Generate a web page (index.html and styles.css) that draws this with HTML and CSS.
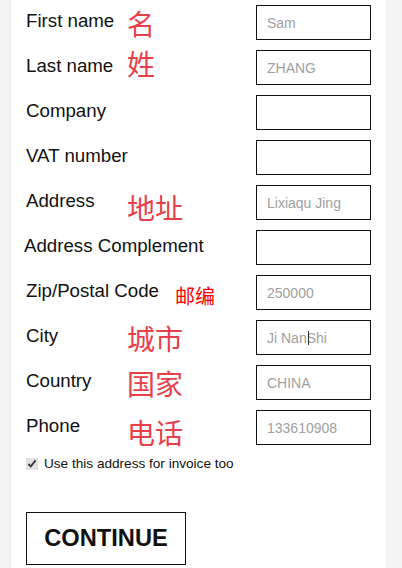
FILE: index.html
```html
<!DOCTYPE html>
<html lang="en">
<head>
  <meta charset="UTF-8" />
  <meta name="viewport" content="width=device-width, initial-scale=1.0"/>
  <title>Address</title>
  <link rel="stylesheet" href="styles.css">
</head>
<body>

  <div class="card">
    <form class="address-form">
      <div class="row">
        <label for="first">First name</label>
        <span class="note">名</span>
        <input type="text" id="first" placeholder="Sam"/>
      </div>
      <div class="row">
        <label for="last">Last name</label>
        <span class="note note-high">姓</span>
        <input type="text" id="last" placeholder="ZHANG"/>
      </div>
      <div class="row">
        <label for="company">Company</label>
        <span class="note"></span>
        <input type="text" id="company"/>
      </div>
      <div class="row">
        <label for="vat">VAT number</label>
        <span class="note"></span>
        <input type="text" id="vat"/>
      </div>
      <div class="row">
        <label for="address">Address</label>
        <span class="note note-low">地址</span>
        <input type="text" id="address" placeholder="Lixiaqu Jing"/>
      </div>
      <div class="row">
        <label for="address2" class="wide">Address Complement</label>
        <input type="text" id="address2"/>
      </div>
      <div class="row">
        <label for="zip" class="wide">Zip/Postal Code</label>
        <span class="note note-small">邮编</span>
        <input type="text" id="zip" placeholder="250000"/>
      </div>
      <div class="row">
        <label for="city">City</label>
        <span class="note">城市</span>
        <div class="field">
          <input type="text" id="city" placeholder="Ji NanShi"/>
          <span class="caret"></span>
        </div>
      </div>
      <div class="row">
        <label for="country">Country</label>
        <span class="note">国家</span>
        <input type="text" id="country" placeholder="CHINA"/>
      </div>
      <div class="row">
        <label for="phone">Phone</label>
        <span class="note note-low">电话</span>
        <input type="text" id="phone" placeholder="133610908"/>
      </div>

      <div class="invoice">
        <input type="checkbox" id="invoice" checked/>
        <label for="invoice">Use this address for invoice too</label>
      </div>

      <button type="button">CONTINUE</button>
    </form>
  </div>

</body>
</html>
```

FILE: styles.css
```css
body {
  font-family: 'Liberation Sans', Arial, sans-serif;
  background: #f4f4f4;
  margin: 0;
  color: #111;
}

.card {
  background: white;
  margin-left: 11px;
  width: 375px;
  min-height: 600px;
  box-shadow: 0 0 2px rgba(0,0,0,0.08);
}

.address-form {
  padding: 0 15px;
}

.row {
  display: grid;
  grid-template-columns: 101px 129px 115px;
  align-items: center;
  height: 45px;
}

.row label {
  grid-column: 1;
  grid-row: 1;
  font-size: 18.7px;
  padding-bottom: 3px;
  white-space: nowrap;
}

.row label.wide {
  grid-column: 1 / 3;
}

.row label[for="address2"] {
  margin-left: -2px;
}

.note {
  grid-column: 2;
  grid-row: 1;
  font-family: 'Noto Sans CJK SC', sans-serif;
  font-size: 28px;
  line-height: 1;
  color: #e8404a;
}

.note-high {
  padding-bottom: 10px;
}

.note-low {
  padding-top: 8px;
}

.note-small {
  font-size: 20px;
  color: #ff0000;
  padding-top: 6px;
  margin-left: 48px;
}

.row input,
.field {
  grid-column: 3;
  grid-row: 1;
}

.row input {
  box-sizing: border-box;
  width: 115px;
  height: 35px;
  border: 1.5px solid #111;
  border-radius: 0;
  padding: 0 10px;
  font-family: 'Liberation Sans', Arial, sans-serif;
  font-size: 14px;
  outline: none;
}

.row input::placeholder {
  color: #a0a0a0;
}

.field {
  position: relative;
  height: 35px;
}

.caret {
  position: absolute;
  left: 52px;
  top: 11px;
  width: 1px;
  height: 14px;
  background: #333;
}

.invoice {
  display: flex;
  align-items: center;
  gap: 6px;
  margin-top: 6px;
  font-size: 13.6px;
}

.invoice input {
  margin: 0;
  width: 12px;
  height: 12px;
  accent-color: #e2e2e2;
}

button {
  margin-top: 41px;
  width: 160px;
  height: 53px;
  background: white;
  border: 1.5px solid #111;
  border-radius: 0;
  font-family: 'Liberation Sans', Arial, sans-serif;
  font-weight: bold;
  font-size: 23.7px;
  color: #111;
  padding: 0;
}
```
